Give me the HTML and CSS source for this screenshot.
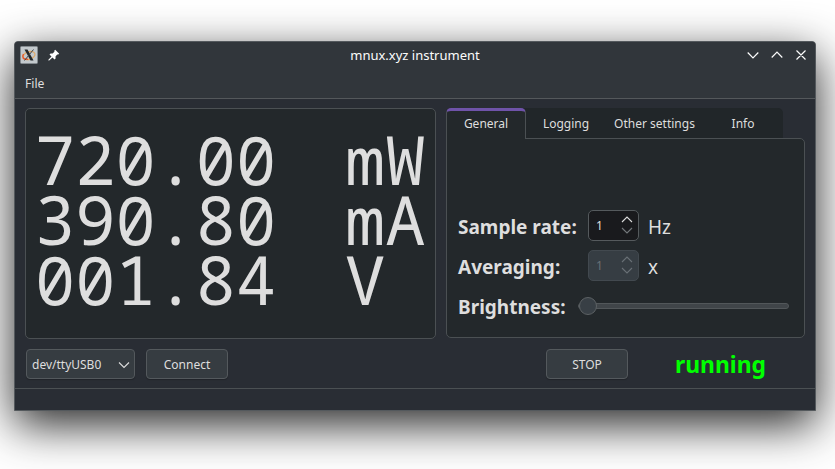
FILE: index.html
```html
<!DOCTYPE html>
<html lang="en">
<head>
<meta charset="utf-8">
<title>mnux.xyz instrument</title>
<link rel="stylesheet" href="styles.css">
</head>
<body>
<div class="window">
  <header class="header">
    <div class="titlebar">
      <svg class="app" viewBox="0 0 18 18"><rect x=".5" y=".5" width="17" height="17" rx="1" fill="#c3c9cd" stroke="#858b90"/><ellipse cx="9" cy="9.5" rx="6.2" ry="3.8" transform="rotate(-18 9 9.5)" fill="none" stroke="#e0a866" stroke-width="1.2"/><path d="M3.5 8C1.8 11 3 14 8 13.2" fill="none" stroke="#e65a2e" stroke-width="1.5"/><path d="M4.500 3.500h3l6 11h-3z" fill="#22272b"/><path d="M13.500 3.500L4.500 14.500" stroke="#3b4146"/></svg>
      <svg class="pin" viewBox="0 0 12 12"><path d="M7.200.8l4 4-1 .8-1 0-1.700 1.800.1 2-1.100 1.100L4.500 8.500 1.200 11.600.4 11.600.4 10.800 3.500 7.500 1.500 5.500 2.600 4.400 4.600 4.500 6.400 2.800V1.600z" fill="#fff"/></svg>
      <h1>mnux.xyz instrument</h1>
      <svg class="wm" viewBox="0 0 60 12"><path d="M.7 3.500L6 8.800l5.300-5.300M24.700 8.500L30 3.200l5.300 5.300M49.500 1.500l9 9M58.500 1.500l-9 9" fill="none" stroke="#fcfcfc" stroke-width="1.2"/></svg>
    </div>
    <nav class="menu">File</nav>
  </header>
  <main class="main">
    <section class="display">
      <div class="row"><span class="value">720.00</span><span>mW</span></div>
      <div class="row"><span class="value">390.80</span><span>mA</span></div>
      <div class="row"><span class="value">001.84</span><span>V</span></div>
    </section>
    <section class="settings">
      <div class="tabs"><div class="tab active">General</div><div class="tab logging">Logging</div><div class="tab other">Other settings</div><div class="tab info">Info</div></div>
      <div class="panel">
        <div class="field"><label class="rate">Sample rate:</label><div class="spin">1<svg viewBox="0 0 12 18"><path d="M1 6l5-5 5 5" /><path class="dim" d="M1 12l5 5 5-5"/></svg></div><span class="unit">Hz</span></div>
        <div class="field"><label class="rate">Averaging:</label><div class="spin off">1<svg viewBox="0 0 12 18"><path d="M1 6l5-5 5 5M1 12l5 5 5-5"/></svg></div><span class="unit">x</span></div>
        <div class="field"><label class="bright">Brightness:</label><div class="slider"><div class="knob"></div></div></div>
      </div>
    </section>
  </main>
  <div class="actions">
    <div class="button port">dev/ttyUSB0<svg viewBox="0 0 12 8"><path d="M1 1.500l5 5 5-5"/></svg></div>
    <div class="button">Connect</div>
    <div class="button stop">STOP</div>
    <strong class="state">running</strong>
  </div>
  <footer class="status"></footer>
</div>
</body>
</html>
```

FILE: styles.css
```css
* { box-sizing: border-box; }
body {
  margin: 0;
  height: 469px;
  overflow: hidden;
  background: #fff;
  padding: 41px 19px 0 14px;
  font: 13px/18px "Noto Sans", sans-serif;
  color: #dedede;
}
svg { display: block; flex: none; }
.window {
  width: 802px;
  height: 370px;
  display: flex;
  flex-direction: column;
  background: #292d34;
  border: 1px solid #54595d;
  border-radius: 4px 4px 0 0;
  box-shadow: 0 14px 46px rgba(0, 0, 0, .85);
}
.header {
  height: 57px;
  background: #31363b;
  border-bottom: 1px solid #54585b;
  border-radius: 3px 3px 0 0;
}
.titlebar { display: flex; align-items: center; height: 26px; padding: 0 8px 0 5px; }
.app { width: 18px; height: 18px; }
.pin { width: 12px; height: 12px; margin-left: 10px; }
h1 { flex: 1; margin: 0 0 0 23px; text-align: center; font-size: 13px; font-weight: 400; color: #fcfcfc; }
.wm { width: 60px; height: 12px; }
.menu { padding: 7px 10px; font-size: 12.2px; }
.main { display: flex; gap: 10px; padding: 9px 10px 0; height: 241px; }
.display {
  width: 411px;
  height: 231px;
  padding: 20px 0 0 9px;
  background: #23282b;
  border: 1px solid #4b5053;
  border-radius: 5px;
  font: 67px/60px "Noto Sans Mono", "DejaVu Sans Mono", monospace;
  font-feature-settings: "zero";
}
.row { display: flex; height: 60px; white-space: pre; }
.value { width: 310px; }
.settings { width: 359px; }
.tabs { display: flex; height: 31px; width: 337px; background: #212629; border-radius: 5px 5px 0 0; margin-bottom: -1px; }
.tab { height: 30px; line-height: 31px; text-align: center; font-size: 12px; }
.active {
  width: 80px;
  height: 31px;
  line-height: 25px;
  position: relative;
  background: #23282b;
  border: 1px solid #4b5053;
  border-top: 3px solid #6f53a9;
  border-bottom: 0;
  border-radius: 5px 5px 0 0;
}
.logging { width: 80px; }
.other { width: 97px; }
.info { width: 80px; }
.panel {
  height: 200px;
  padding: 68px 15px 0 11px;
  background: #23282b;
  border: 1px solid #4b5053;
  border-radius: 0 5px 5px 5px;
}
.field { display: flex; align-items: center; height: 40px; font-size: 19px; }
label { font-weight: 700; white-space: nowrap; }
.rate { width: 130px; }
.bright { width: 120px; }
.spin {
  display: flex;
  align-items: center;
  justify-content: space-between;
  width: 51px;
  height: 31px;
  padding: 0 5px 0 7px;
  margin-top: -3px;
  font-size: 12px;
  background: #191a1d;
  border: 1px solid #555a5d;
  border-radius: 5px;
}
.spin svg { width: 12px; height: 18px; margin-top: -1px; }
.spin path, .port path { fill: none; stroke: #dedede; stroke-width: 1.1; }
.spin .dim { stroke: #74797c; }
.spin.off { background: #363d43; border-color: #42494f; color: #697076; }
.spin.off path { stroke: #697076; }
.unit { margin-left: 9px; }
.slider { display: flex; align-items: center; width: 211px; height: 6px; margin-top: -2px; background: #404549; border: 1px solid #52575a; border-radius: 3px; }
.knob { width: 18px; height: 18px; border: 1px solid #5c6164; border-radius: 50%; background: #383f45; flex: none; }
.actions { display: flex; height: 48px; padding: 9px 11px; }
.button {
  display: flex;
  align-items: center;
  justify-content: center;
  width: 82px;
  height: 30px;
  padding-top: 2px;
  font-size: 12px;
  background: #363c41;
  border: 1px solid #54595d;
  border-radius: 4px;
  box-shadow: 0 1px 1px rgba(0, 0, 0, .2);
}
.port { width: 109px; justify-content: space-between; padding: 2px 4px 0 5px; margin-right: 11px; }
.port svg { width: 12px; height: 8px; }
.stop { margin-left: 318px; }
.state { margin-left: 47px; font-size: 22.9px; line-height: 31px; color: #0f0; }
.status { flex: 1; border-top: 1px solid #4b5053; }
```
